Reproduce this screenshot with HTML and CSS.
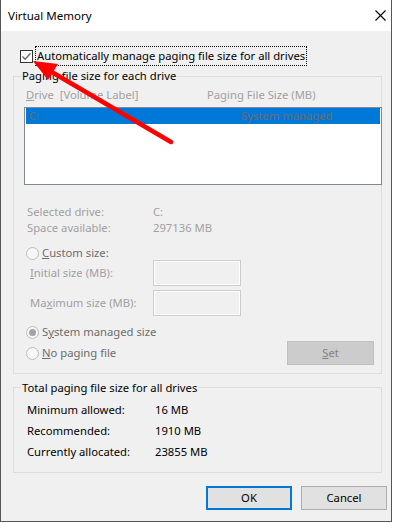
FILE: index.html
```html
<!DOCTYPE html>
<html lang="en">
<head>
  <meta charset="UTF-8" />
  <title>Virtual Memory</title>
  <link rel="stylesheet" href="styles.css">
</head>
<body>
  <div class="window">
    <div class="titlebar">
      <span class="title">Virtual Memory</span>
      <svg class="close" width="11" height="11" viewBox="0 0 11 11">
        <path d="M0.5 0.5 L10.5 10.5 M10.5 0.5 L0.5 10.5" stroke="#000" stroke-width="1.1" fill="none"/>
      </svg>
    </div>

    <div class="content">
      <div class="auto-row">
        <span class="checkbox">
          <svg width="11" height="11" viewBox="0 0 11 11">
            <path d="M1.5 5.5 L4.2 8.3 L9.5 2.2" stroke="#6d6d6d" stroke-width="1.4" fill="none"/>
          </svg>
        </span>
        <span class="auto-label">Automatically manage paging file size for all drives</span>
      </div>

      <div class="group">
        <div class="group-title">Paging file size for each drive</div>
        <div class="list-head">
          <span class="head-drive"><u>D</u>rive&nbsp; [Volume Label]</span>
          <span>Paging File Size (MB)</span>
        </div>
        <div class="listbox">
          <div class="list-row">
            <span class="row-drive">C:</span>
            <span>System managed</span>
          </div>
        </div>

        <div class="info">
          <div class="info-row"><span class="info-label">Selected drive:</span><span>C:</span></div>
          <div class="info-row"><span class="info-label">Space available:</span><span>297136 MB</span></div>
        </div>

        <div class="radio-row custom">
          <span class="radio"></span>
          <span class="radio-label"><u>C</u>ustom size:</span>
        </div>
        <div class="size-row first">
          <span class="size-label"><u>I</u>nitial size (MB):</span>
          <span class="size-input"></span>
        </div>
        <div class="size-row">
          <span class="size-label">Ma<u>x</u>imum size (MB):</span>
          <span class="size-input"></span>
        </div>

        <div class="radio-row system">
          <span class="radio checked"></span>
          <span class="radio-label">S<u>y</u>stem managed size</span>
        </div>
        <div class="radio-row nopage">
          <span class="radio"></span>
          <span class="radio-label"><u>N</u>o paging file</span>
          <span class="set-btn"><u>S</u>et</span>
        </div>
      </div>

      <div class="group total">
        <div class="group-title">Total paging file size for all drives</div>
        <div class="totals">
          <div class="total-row"><span class="total-label">Minimum allowed:</span><span>16 MB</span></div>
          <div class="total-row"><span class="total-label">Recommended:</span><span>1910 MB</span></div>
          <div class="total-row"><span class="total-label">Currently allocated:</span><span>23855 MB</span></div>
        </div>
      </div>

      <div class="buttons">
        <span class="btn default">OK</span>
        <span class="btn">Cancel</span>
      </div>
    </div>

    <svg class="arrow" width="200" height="160" viewBox="0 0 200 160">
      <line x1="171" y1="142" x2="50" y2="71" stroke="#ff0000" stroke-width="4.5" stroke-linecap="round"/>
      <polygon points="33,61 58,64 48,80" fill="#ff0000"/>
    </svg>
  </div>
</body>
</html>
```

FILE: styles.css
```css
* {
  margin: 0;
  padding: 0;
  box-sizing: border-box;
}

body {
  background: #fff;
  font-family: "Noto Sans", "Open Sans", sans-serif;
  font-size: 11.25px;
  line-height: 16px;
  color: #000;
}

.window {
  position: relative;
  width: 392px;
  height: 522px;
  border: 1px solid #555;
  border-top: none;
  background: #f0f0f0;
}

.titlebar {
  height: 31px;
  background: #fff;
  display: flex;
  align-items: flex-start;
  justify-content: space-between;
  padding: 8px 0 0 7px;
  font-size: 11.5px;
}

.close {
  margin: 2px 5px 0 0;
}

.content {
  padding: 0 9px 0 12px;
}

.auto-row {
  display: flex;
  align-items: center;
  margin: 15px 0 0 7px;
}

.checkbox {
  width: 13px;
  height: 13px;
  border: 1px solid #333;
  background: #fff;
  display: flex;
}

.auto-label {
  margin-left: 2px;
  padding: 1px 1px;
  border: 1px dotted #000;
}

.group {
  margin-top: 10px;
  border: 1px solid #dcdcdc;
  padding-bottom: 8px;
}

.group-title {
  width: fit-content;
  margin: -9px 0 0 7px;
  padding: 0 1px;
  background: #f0f0f0;
}

.list-head {
  display: flex;
  margin-top: 3px;
  padding-left: 12px;
  color: #a0a0a0;
}

.head-drive {
  width: 181px;
}

.listbox {
  margin: 4px 0 0 10px;
  width: 358px;
  height: 78px;
  border: 1px solid #828790;
  background: #fff;
  padding: 0 1px;
}

.list-row {
  display: flex;
  height: 16px;
  background: #0078d7;
  color: #6d6d6d;
  padding-left: 3px;
}

.row-drive {
  width: 212px;
}

.info {
  margin-top: 19px;
  padding-left: 13px;
  color: #a0a0a0;
}

.info-row {
  display: flex;
}

.info-label {
  width: 126px;
}

.radio-row {
  display: flex;
  align-items: center;
  padding-left: 12px;
  color: #6d6d6d;
}

.radio-row.custom {
  margin-top: 9px;
}

.radio-row.system {
  margin-top: 8px;
}

.radio-row.nopage {
  margin-top: 1px;
  height: 24px;
  padding-right: 7px;
}

.radio {
  width: 13px;
  height: 13px;
  border: 1px solid #bcbcbc;
  border-radius: 50%;
  background: #f7f7f7;
  display: flex;
  align-items: center;
  justify-content: center;
}

.radio.checked::after {
  content: "";
  width: 7px;
  height: 7px;
  border-radius: 50%;
  background: #a3a3a3;
}

.radio-label {
  margin-left: 3px;
}

.size-row {
  display: flex;
  align-items: center;
  height: 26px;
  margin-top: 4px;
  padding-left: 16px;
  color: #a0a0a0;
}

.size-row.first {
  margin-top: -1px;
}

.size-label {
  width: 123px;
}

.size-input {
  width: 88px;
  height: 26px;
  border: 1px solid #cccccc;
  box-shadow: inset 0 0 0 1px #fff;
  background: #f0f0f0;
}

.set-btn {
  margin-left: auto;
  width: 87px;
  height: 24px;
  border: 1px solid #bfbfbf;
  background: #cccccc;
  color: #838383;
  display: flex;
  align-items: center;
  justify-content: center;
}

.group.total {
  margin-top: 13px;
  padding-bottom: 12px;
}

.group.total .group-title {
  margin-top: -8px;
}

.totals {
  margin-top: 6px;
  padding-left: 13px;
  display: flex;
  flex-direction: column;
  gap: 5px;
}

.total-row {
  display: flex;
}

.total-label {
  width: 128px;
}

.buttons {
  display: flex;
  justify-content: flex-end;
  gap: 9px;
  margin: 13px -5px 0 0;
}

.btn {
  width: 86px;
  height: 24px;
  border: 1px solid #adadad;
  background: #e1e1e1;
  display: flex;
  align-items: center;
  justify-content: center;
}

.btn.default {
  border: 2px solid #0078d7;
}

.arrow {
  position: absolute;
  left: -1px;
  top: 0;
}
```
